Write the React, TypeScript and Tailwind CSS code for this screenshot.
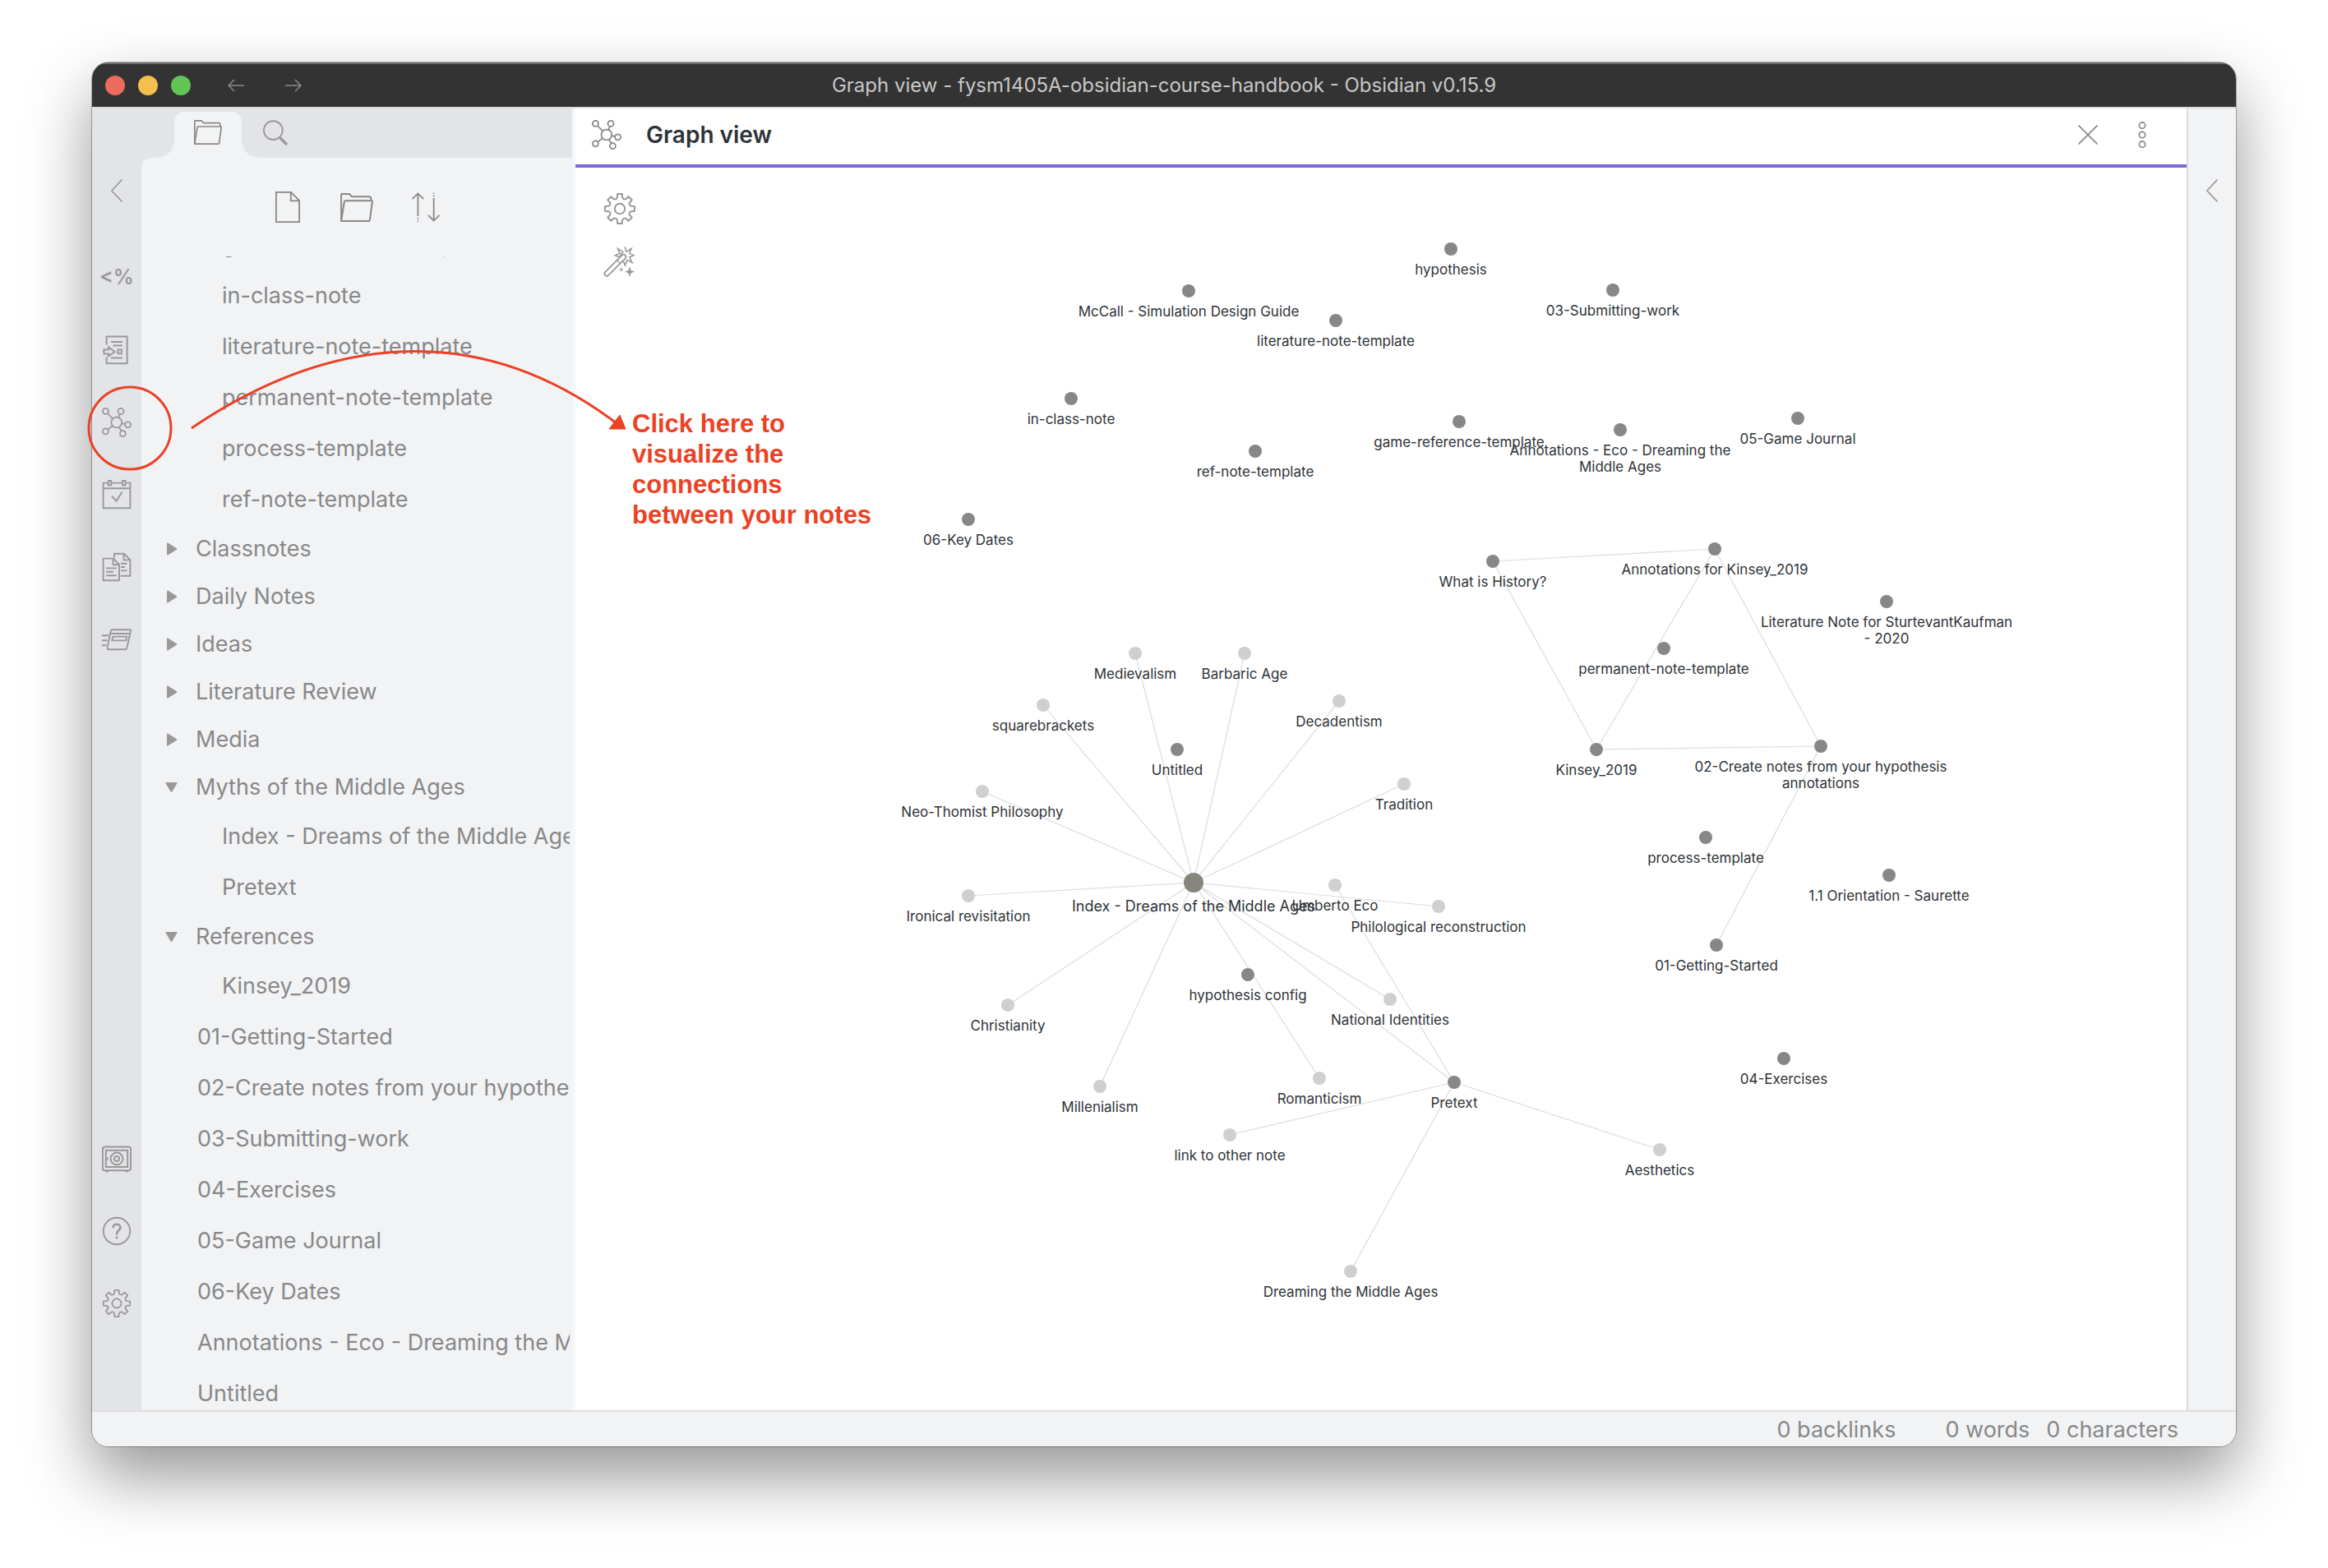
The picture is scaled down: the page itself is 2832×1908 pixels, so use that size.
import type { ReactNode } from "react";

type IconProps = { className?: string };

function Svg({ box, className, sw = 2, children }: { box: string; className?: string; sw?: number; children: ReactNode }) {
  return (
    <svg viewBox={box} className={className} fill="none" stroke="currentColor" strokeWidth={sw} aria-hidden="true">
      {children}
    </svg>
  );
}

const FolderIcon = ({ className }: IconProps) => (
  <Svg box="0 0 34 30" className={className} sw={1.7}>
    <path strokeLinejoin="round" d="M0.8 29.2V1.6Q0.8 0.8 1.6 0.8H8.8Q9.6 0.8 10 1.6L10.8 2.8Q11.3 3.6 12.2 3.6H30.4Q31.4 3.6 31.6 4.6L32.2 7.8" />
    <path strokeLinejoin="round" d="M0.8 29.2L4 9Q4.2 8 5.2 8H32.2Q33.4 8 33.2 9L30.6 28.2Q30.4 29.2 29.4 29.2Z" />
  </Svg>
);

const SearchIcon = ({ className }: IconProps) => (
  <Svg box="0 0 30 31" className={className} sw={1.9}>
    <circle cx="12.3" cy="12.6" r="11.4" />
    <path strokeWidth="3.4" d="M20.6 21.6L29 30" />
  </Svg>
);

const FileIcon = ({ className }: IconProps) => (
  <Svg box="0 0 30 38" className={className} sw={1.8}>
    <path d="M0.9 0.9H19L29.1 11V37.1H0.9ZM18.8 0.9V11.3H29.1" />
  </Svg>
);

const SortIcon = ({ className }: IconProps) => (
  <Svg box="0 0 34 36" className={className} sw={1.8}>
    <path d="M7.4 1.2V29M7.4 31V32.6M7.4 34.2V35.6M0.6 8.2L7.4 1.4L14.2 8.2" />
    <path d="M26.7 34.6V7M26.7 5V3.4M26.7 1.8V0.4M19.9 27.8L26.7 34.6L33.5 27.8" />
  </Svg>
);

const GraphIcon = ({ className }: IconProps) => (
  <Svg box="0 0 36 36" className={className} sw={1.8}>
    <circle cx="17.8" cy="18" r="6.4" />
    <circle cx="4.4" cy="4.4" r="3.5" />
    <circle cx="23" cy="4.4" r="3.5" />
    <circle cx="31.6" cy="20.8" r="3.5" />
    <circle cx="25.4" cy="31.6" r="3.5" />
    <circle cx="4.4" cy="28.8" r="3.5" />
    <path d="M7 7L13.2 13.6M22 7.8L20 12M24 19.2L28.2 20M20.4 23.8L24 28.4M7.2 26.6L13 22.2" />
  </Svg>
);

const ImportIcon = ({ className }: IconProps) => (
  <Svg box="0 0 36 36" className={className}>
    <path d="M5.6 11.5V1.6H30.6V34.2H5.6V26.5" />
    <path d="M2.4 17.4H8V14.4L15.6 20L8 25.4V22.4H2.4Z" />
    <path d="M11 8H25M13.6 12.4H25M11 27.6H25M19.4 17.6H24V22.2H19.4Z" />
  </Svg>
);

const CalendarIcon = ({ className }: IconProps) => (
  <Svg box="0 0 36 36" className={className} sw={1.9}>
    <path d="M7.8 3.6H1.6V34.2H34.4V3.6H28.4M11.2 3.6H25M1.6 10.2H34.4" />
    <path d="M7.8 1H11.2V6.6H7.8ZM25 1H28.4V6.6H25Z" />
    <path d="M12 19.6L17.6 25.6L24.6 14.6" />
  </Svg>
);

const DocsIcon = ({ className }: IconProps) => (
  <Svg box="0 0 36 36" className={className} sw={1.9}>
    <path d="M1.6 7.6H14L21 15V34.2H1.6ZM13.6 7.6V15.2H21" />
    <path d="M15 6.6V1.8H27L34.4 9.4V28.8H22.6M26.6 1.8V9.4H34.4" />
    <path d="M5.2 19.4H17.6M5.2 23.8H14M5.2 28.2H17.6M23 13.8H30.6M23 18H28M23 22.4H30.6" />
  </Svg>
);

const CardsIcon = ({ className }: IconProps) => (
  <Svg box="0 0 36 36" className={className} sw={1.9}>
    <path strokeLinejoin="round" d="M12 6.2H34Q35.4 6.2 35 8L30.4 28.4Q30 30.2 28.4 30.2H8Q6.2 30.2 6.6 28.4L10.6 8Q11 6.2 12 6.2ZM10.4 11H34.2" />
    <path d="M13.4 14.6H30.4L29.2 19.4H12.2Z" />
    <path d="M0 13.2H8M0 19.2H6.6M0 25.2H5.4" />
  </Svg>
);

const VaultIcon = ({ className }: IconProps) => (
  <Svg box="0 0 36 36" className={className} sw={2}>
    <rect x="0.9" y="3.6" width="34.2" height="28.6" rx="2.6" />
    <rect x="4.8" y="7.8" width="26.4" height="20.2" />
    <circle cx="18" cy="18" r="7.4" />
    <circle cx="18" cy="18" r="3" />
    <path d="M4 33.2H8M28 33.2H32M6.4 16V20" />
  </Svg>
);

const HelpIcon = ({ className }: IconProps) => (
  <Svg box="0 0 36 36" className={className} sw={1.9}>
    <circle cx="18" cy="18" r="16.2" />
    <path strokeWidth="2.6" d="M13.6 14.2C13.6 11.4 15.4 9.8 18 9.8S22.5 11.4 22.5 13.8C22.5 17 18 17.2 18 21.8V22.6M18 24.4V27.2" />
  </Svg>
);

const gearPath = (() => {
  const at = (deg: number, r: number) => {
    const a = (deg * Math.PI) / 180;
    return `${(18 + r * Math.sin(a)).toFixed(2)} ${(18 - r * Math.cos(a)).toFixed(2)}`;
  };
  const parts: string[] = [];
  for (let i = 0; i < 8; i++) {
    const a = i * 45;
    parts.push(`${i === 0 ? "M" : "L"}${at(a - 13, 12.6)}L${at(a - 9, 16.4)}L${at(a + 9, 16.4)}L${at(a + 13, 12.6)}Q${at(a + 22.5, 10.4)} ${at(a + 32, 12.6)}`);
  }
  return parts.join("") + "Z";
})();

const GearIcon = ({ className }: IconProps) => (
  <Svg box="0 0 36 36" className={className} sw={1.8}>
    <path strokeLinejoin="round" d={gearPath} />
    <circle cx="18" cy="18" r="5.6" />
  </Svg>
);

const WandIcon = ({ className }: IconProps) => (
  <Svg box="0 0 38 39" className={className} sw={1.6}>
    <path d="M26 2.4L28 8.4L34 4.6L31.6 10.4L37 12.6L31.8 15L35 21.4L29 18.4L26.4 25L24 18.4M19.4 15L14.4 12.8L20 10.4L17.6 4.6L23.8 8.4Z" strokeLinejoin="miter" />
    <path stroke="currentColor" strokeWidth="7.4" strokeLinecap="round" d="M4.2 35L24.6 14.6" />
    <path stroke="#ffffff" strokeWidth="3.8" strokeLinecap="round" d="M4.2 35L24.6 14.6" />
    <path d="M16 18L21 23" strokeWidth="1.2" />
    <path fill="currentColor" stroke="none" d="M32 26L33.6 31L38 32.6L33.6 34.2L32 39L30.4 34.2L26 32.6L30.4 31ZM21.8 26.6L22.5 29.2L25 30L22.5 30.8L21.8 33.4L21.1 30.8L18.6 30L21.1 29.2Z" />
  </Svg>
);

const ChevronLeft = ({ className }: IconProps) => (
  <Svg box="0 0 14 28" className={className} sw={1.6}>
    <path d="M13.4 0.6L0.9 14L13.4 27.4" />
  </Svg>
);

const ArrowIcon = ({ className }: IconProps) => (
  <Svg box="0 0 20 16" className={className} sw={1.5}>
    <path d="M20 8H1M8 1L1 8L8 15" />
  </Svg>
);

const CloseIcon = ({ className }: IconProps) => (
  <Svg box="0 0 24 24" className={className} sw={1.6}>
    <path d="M0.5 0.5L23.5 23.5M23.5 0.5L0.5 23.5" />
  </Svg>
);

const DotsIcon = ({ className }: IconProps) => (
  <Svg box="0 0 10 32" className={className} sw={1.7}>
    <circle cx="5" cy="4.6" r="3.7" />
    <circle cx="5" cy="16" r="3.7" />
    <circle cx="5" cy="27.6" r="3.7" />
  </Svg>
);

type Row = { kind: "nested" | "root" | "folder" | "open"; name: string };

const rows: Row[] = [
  { kind: "nested", name: "game-reference-template" },
  { kind: "nested", name: "in-class-note" },
  { kind: "nested", name: "literature-note-template" },
  { kind: "nested", name: "permanent-note-template" },
  { kind: "nested", name: "process-template" },
  { kind: "nested", name: "ref-note-template" },
  { kind: "folder", name: "Classnotes" },
  { kind: "folder", name: "Daily Notes" },
  { kind: "folder", name: "Ideas" },
  { kind: "folder", name: "Literature Review" },
  { kind: "folder", name: "Media" },
  { kind: "open", name: "Myths of the Middle Ages" },
  { kind: "nested", name: "Index - Dreams of the Middle Ages" },
  { kind: "nested", name: "Pretext" },
  { kind: "open", name: "References" },
  { kind: "nested", name: "Kinsey_2019" },
  { kind: "root", name: "01-Getting-Started" },
  { kind: "root", name: "02-Create notes from your hypothesis annotations" },
  { kind: "root", name: "03-Submitting-work" },
  { kind: "root", name: "04-Exercises" },
  { kind: "root", name: "05-Game Journal" },
  { kind: "root", name: "06-Key Dates" },
  { kind: "root", name: "Annotations - Eco - Dreaming the Middle Ages" },
  { kind: "root", name: "Untitled" },
];

function FileRow({ row }: { row: Row }) {
  if (row.kind === "folder" || row.kind === "open") {
    return (
      <button type="button" className="flex h-[58px] w-full shrink-0 items-center pl-[29px] text-left whitespace-nowrap">
        <svg viewBox="0 0 16 16" className="mr-[21px] size-4 shrink-0 fill-[#999999]" aria-hidden="true">
          {row.kind === "folder" ? <path d="M2 1.4Q2 0 3.2 0.6L14 7.2Q15.2 8 14 8.8L3.2 15.4Q2 16 2 14.6Z" /> : <path d="M0.8 2H14.2Q15 2 14.5 3L8.5 13.2Q7.5 14.4 6.5 13.2L0.5 3Q0 2 0.8 2Z" />}
        </svg>
        {row.name}
      </button>
    );
  }
  return (
    <button
      type="button"
      className={
        row.kind === "nested"
          ? "flex h-[62px] w-full shrink-0 items-center pl-[98px] text-left whitespace-nowrap"
          : "flex h-[62px] w-full shrink-0 items-center pl-[68px] text-left whitespace-nowrap"
      }
    >
      {row.name}
    </button>
  );
}

type GraphNode = { x: number; y: number; label: string[]; kind?: "faint" | "hub" };

const nodes: Record<string, GraphNode> = {
  hypothesis: { x: 1765, y: 303, label: ["hypothesis"] },
  submitting: { x: 1962, y: 353, label: ["03-Submitting-work"] },
  mccall: { x: 1446, y: 354, label: ["McCall - Simulation Design Guide"] },
  litTemplate: { x: 1625, y: 390, label: ["literature-note-template"] },
  inClass: { x: 1303, y: 485, label: ["in-class-note"] },
  gameRef: { x: 1775, y: 513, label: ["game-reference-template"] },
  annEco: { x: 1971, y: 523, label: ["Annotations - Eco - Dreaming the", "Middle Ages"] },
  journal: { x: 2187, y: 509, label: ["05-Game Journal"] },
  refNote: { x: 1527, y: 549, label: ["ref-note-template"] },
  keyDates: { x: 1178, y: 632, label: ["06-Key Dates"] },
  history: { x: 1816, y: 683, label: ["What is History?"] },
  annKinsey: { x: 2086, y: 668, label: ["Annotations for Kinsey_2019"] },
  litNote: { x: 2295, y: 732, label: ["Literature Note for SturtevantKaufman", "- 2020"] },
  permanent: { x: 2024, y: 789, label: ["permanent-note-template"] },
  kinsey: { x: 1942, y: 912, label: ["Kinsey_2019"] },
  create: { x: 2215, y: 908, label: ["02-Create notes from your hypothesis", "annotations"] },
  process: { x: 2075, y: 1019, label: ["process-template"] },
  orientation: { x: 2298, y: 1065, label: ["1.1 Orientation - Saurette"] },
  started: { x: 2088, y: 1150, label: ["01-Getting-Started"] },
  exercises: { x: 2170, y: 1288, label: ["04-Exercises"] },
  medievalism: { x: 1381, y: 795, label: ["Medievalism"], kind: "faint" },
  barbaric: { x: 1514, y: 795, label: ["Barbaric Age"], kind: "faint" },
  decadentism: { x: 1629, y: 853, label: ["Decadentism"], kind: "faint" },
  brackets: { x: 1269, y: 858, label: ["squarebrackets"], kind: "faint" },
  untitled: { x: 1432, y: 912, label: ["Untitled"] },
  tradition: { x: 1708, y: 954, label: ["Tradition"], kind: "faint" },
  neo: { x: 1195, y: 963, label: ["Neo-Thomist Philosophy"], kind: "faint" },
  ironical: { x: 1178, y: 1090, label: ["Ironical revisitation"], kind: "faint" },
  index: { x: 1452, y: 1074, label: ["Index - Dreams of the Middle Ages"], kind: "hub" },
  umberto: { x: 1624, y: 1077, label: ["Umberto Eco"], kind: "faint" },
  philological: { x: 1750, y: 1103, label: ["Philological reconstruction"], kind: "faint" },
  config: { x: 1518, y: 1186, label: ["hypothesis config"] },
  national: { x: 1691, y: 1216, label: ["National Identities"], kind: "faint" },
  christianity: { x: 1226, y: 1223, label: ["Christianity"], kind: "faint" },
  millenialism: { x: 1338, y: 1322, label: ["Millenialism"], kind: "faint" },
  romanticism: { x: 1605, y: 1312, label: ["Romanticism"], kind: "faint" },
  pretext: { x: 1769, y: 1317, label: ["Pretext"] },
  linkOther: { x: 1496, y: 1381, label: ["link to other note"], kind: "faint" },
  aesthetics: { x: 2019, y: 1399, label: ["Aesthetics"], kind: "faint" },
  dreaming: { x: 1643, y: 1547, label: ["Dreaming the Middle Ages"], kind: "faint" },
};

const edges: [string, string][] = [
  ["index", "medievalism"],
  ["index", "barbaric"],
  ["index", "decadentism"],
  ["index", "brackets"],
  ["index", "tradition"],
  ["index", "neo"],
  ["index", "ironical"],
  ["index", "philological"],
  ["index", "national"],
  ["index", "christianity"],
  ["index", "millenialism"],
  ["index", "romanticism"],
  ["index", "pretext"],
  ["pretext", "umberto"],
  ["pretext", "linkOther"],
  ["pretext", "aesthetics"],
  ["pretext", "dreaming"],
  ["history", "annKinsey"],
  ["history", "kinsey"],
  ["annKinsey", "kinsey"],
  ["annKinsey", "create"],
  ["kinsey", "create"],
  ["create", "started"],
];

function Graph() {
  return (
    <svg viewBox="700 204 1960 1512" className="block size-full" role="img" aria-label="Graph of linked notes">
      <g stroke="#dcdcdc" strokeWidth="1.2">
        {edges.map(([a, b]) => (
          <line key={a + b} x1={nodes[a].x} y1={nodes[a].y} x2={nodes[b].x} y2={nodes[b].y} />
        ))}
      </g>
      {Object.entries(nodes).map(([id, n]) => (
        <g key={id}>
          <circle cx={n.x} cy={n.y} r={n.kind === "hub" ? 12 : 8} className={n.kind === "hub" ? "fill-[#86867e]" : n.kind === "faint" ? "fill-[#cfcfcf]" : "fill-[#878787]"} />
          {n.label.map((line, i) => (
            <text key={line} x={n.x} y={n.y + (n.kind === "hub" ? 35 : 31) + i * 20} textAnchor="middle" className={n.kind === "hub" ? "fill-[#2e3338] text-[18px]" : "fill-[#2e3338] text-[17px]"}>
              {line}
            </text>
          ))}
        </g>
      ))}
    </svg>
  );
}

function RibbonButton({ label, children }: { label: string; children: ReactNode }) {
  return (
    <button type="button" aria-label={label} className="flex size-9 items-center justify-center">
      {children}
    </button>
  );
}

export default function App() {
  return (
    <div className="flex h-screen bg-white px-28 pt-[76px] pb-[148px] font-['Inter',sans-serif]">
      <div className="relative flex min-w-0 flex-1">
        <div className="flex min-w-0 flex-1 flex-col overflow-hidden rounded-[20px] shadow-[0_0_0_1px_rgba(0,0,0,0.28),0_36px_80px_rgba(0,0,0,0.42)]">
          <header className="grid h-14 shrink-0 grid-cols-[1fr_auto_1fr] items-center border-t-2 border-b-2 border-t-[#6b6b6b] border-b-[#dddddd] bg-[#333333] px-4">
            <div className="flex items-center">
              <div className="flex gap-4">
                <button type="button" aria-label="Close window" className="size-6 rounded-full bg-[#ed6a5e]" />
                <button type="button" aria-label="Minimize window" className="size-6 rounded-full bg-[#f5bf4f]" />
                <button type="button" aria-label="Zoom window" className="size-6 rounded-full bg-[#61c554]" />
              </div>
              <div className="ml-[45px] flex gap-[50px] text-[#8a8a8a]">
                <button type="button" aria-label="Back">
                  <ArrowIcon className="h-4 w-5" />
                </button>
                <button type="button" aria-label="Forward">
                  <ArrowIcon className="h-4 w-5 rotate-180" />
                </button>
              </div>
            </div>
            <h1 className="text-[24px] text-[#c8c8c8]">Graph view - fysm1405A-obsidian-course-handbook - Obsidian v0.15.9</h1>
          </header>

          <div className="flex min-h-0 flex-1">
            <nav aria-label="Ribbon" className="flex w-[60px] shrink-0 flex-col items-center bg-[#e3e4e8] pt-[86px] pb-[112px] text-[#999999]">
              <button type="button" aria-label="Collapse sidebar">
                <ChevronLeft className="h-7 w-3.5" />
              </button>
              <div className="mt-[74px] flex flex-col gap-[52px]">
                <RibbonButton label="Templater">
                  <span className="text-[25px] font-semibold">&lt;%</span>
                </RibbonButton>
                <RibbonButton label="Insert template">
                  <ImportIcon className="size-9" />
                </RibbonButton>
                <RibbonButton label="Open graph view">
                  <GraphIcon className="size-9" />
                </RibbonButton>
                <RibbonButton label="Open today's daily note">
                  <CalendarIcon className="size-9" />
                </RibbonButton>
                <RibbonButton label="Templates">
                  <DocsIcon className="size-9" />
                </RibbonButton>
                <RibbonButton label="Flashcards">
                  <CardsIcon className="size-9" />
                </RibbonButton>
              </div>
              <div className="mt-auto flex flex-col gap-[52px]">
                <RibbonButton label="Open another vault">
                  <VaultIcon className="size-9" />
                </RibbonButton>
                <RibbonButton label="Help">
                  <HelpIcon className="size-9" />
                </RibbonButton>
                <RibbonButton label="Settings">
                  <GearIcon className="size-9" />
                </RibbonButton>
              </div>
            </nav>

            <aside className="flex w-[524px] shrink-0 flex-col bg-[#e3e4e8] text-[#888888]">
              <div className="flex h-[60px] shrink-0 pt-1 pl-10">
                <button type="button" aria-label="File explorer" className="relative flex w-[82px] items-center justify-center rounded-t-xl bg-[#f2f3f5] pb-1.5">
                  <span className="absolute bottom-0 -left-5 size-5 bg-[radial-gradient(circle_at_0_0,transparent_19px,#f2f3f5_20px)]" />
                  <FolderIcon className="h-[30px] w-[34px]" />
                  <span className="absolute -right-5 bottom-0 size-5 bg-[radial-gradient(circle_at_100%_0,transparent_19px,#f2f3f5_20px)]" />
                </button>
                <button type="button" aria-label="Search" className="flex w-[82px] items-center justify-center pb-1.5 text-[#999999]">
                  <SearchIcon className="h-[31px] w-[30px]" />
                </button>
              </div>
              <div className="flex min-h-0 flex-1 flex-col rounded-tl-xl bg-[#f2f3f5]">
                <div className="flex h-[120px] shrink-0 items-center justify-center gap-11">
                  <button type="button" aria-label="New note" className="flex w-10 justify-center">
                    <FileIcon className="h-[38px] w-[30px]" />
                  </button>
                  <button type="button" aria-label="New folder" className="flex w-10 justify-center">
                    <FolderIcon className="h-[35px] w-10" />
                  </button>
                  <button type="button" aria-label="Change sort order" className="flex w-10 justify-center">
                    <SortIcon className="h-9 w-[34px]" />
                  </button>
                </div>
                <div className="mr-[3px] flex min-h-0 flex-1 flex-col overflow-hidden text-[27px]">
                  <div className="-mt-[45px] flex flex-col">
                    {rows.map((row) => (
                      <FileRow key={row.name} row={row} />
                    ))}
                  </div>
                </div>
              </div>
            </aside>

            <main className="flex min-w-0 flex-1 flex-col border-l-4 border-[#f6f7f8] bg-white">
              <div className="flex h-[72px] shrink-0 items-center border-b-4 border-[#7b6cd9] pr-[49px] pb-1 pl-5 text-[#888888]">
                <GraphIcon className="size-9" />
                <h2 className="ml-[30px] flex-1 text-[28px] font-semibold text-[#2e3338]">Graph view</h2>
                <button type="button" aria-label="Close">
                  <CloseIcon className="size-6" />
                </button>
                <button type="button" aria-label="More options" className="ml-[49px]">
                  <DotsIcon className="h-8 w-2.5" />
                </button>
              </div>
              <div className="relative min-h-0 flex-1">
                <Graph />
                <div className="absolute top-[30px] left-[34px] flex flex-col gap-6 text-[#999999]">
                  <button type="button" aria-label="Graph settings">
                    <GearIcon className="size-10" />
                  </button>
                  <button type="button" aria-label="Animate graph">
                    <WandIcon className="h-[39px] w-[38px]" />
                  </button>
                </div>
              </div>
            </main>

            <div className="flex w-[60px] shrink-0 flex-col items-center border-l-2 border-[#dddddd] bg-[#f2f3f5] pt-[86px] text-[#999999]">
              <button type="button" aria-label="Expand right sidebar">
                <ChevronLeft className="h-7 w-3.5" />
              </button>
            </div>
          </div>

          <footer className="flex h-11 shrink-0 items-center justify-end border-t-2 border-[#dddddd] bg-[#f2f3f5] pt-0.5 pr-[70px] text-[27px] text-[#888888]">
            <span className="mr-[60px]">0 backlinks</span>
            <span className="mr-5">0 words</span>
            <span>0 characters</span>
          </footer>
        </div>

        <svg viewBox="112 76 700 600" className="pointer-events-none absolute top-0 left-0 h-[600px] w-[700px] overflow-visible" fill="none" stroke="#eb4124" strokeWidth="3" aria-hidden="true">
          <circle cx="158" cy="521" r="50" />
          <path d="M233 521C392 413 575 383 750 515" />
          <path fill="#eb4124" strokeWidth="1" d="M754 505L761 522L741 522Z" />
        </svg>
        <p className="absolute top-[421px] left-[657px] w-[300px] font-['Liberation_Sans',Arial,sans-serif] text-[31px] leading-[37px] font-bold text-[#eb4124]">
          Click here to visualize the connections between your notes
        </p>
      </div>
    </div>
  );
}
